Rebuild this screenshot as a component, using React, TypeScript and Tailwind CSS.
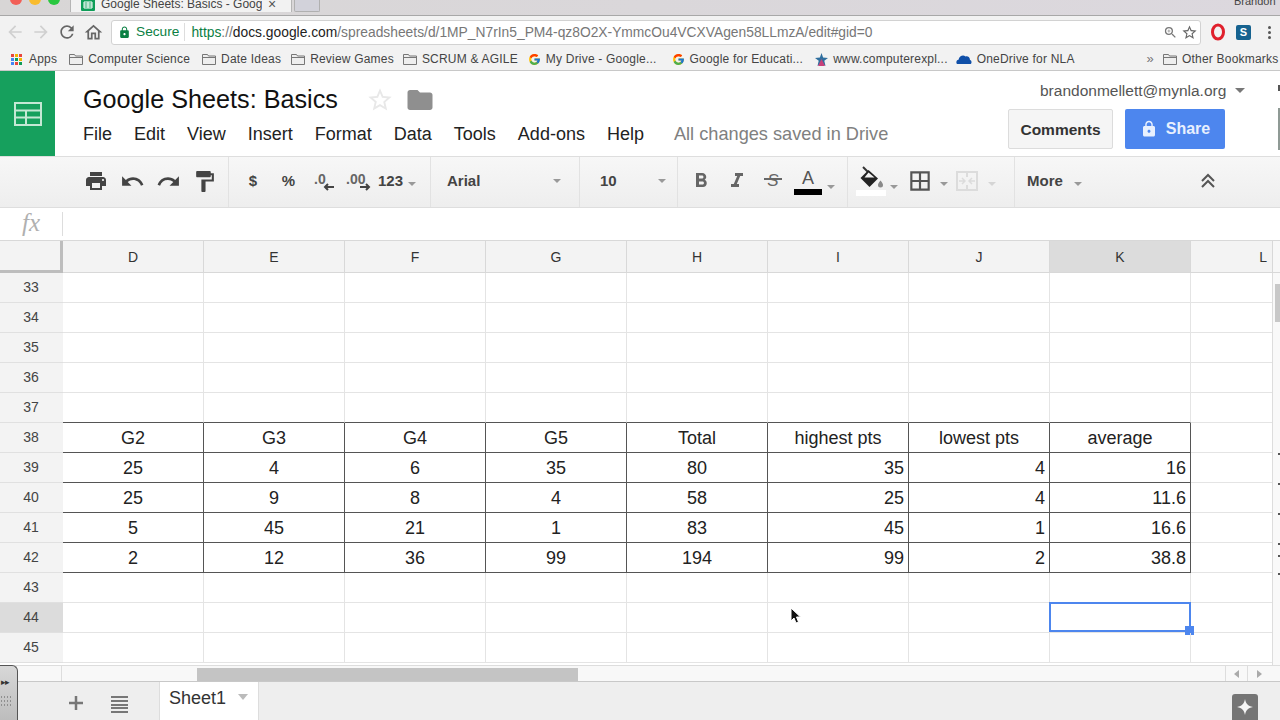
import { FcGoogle } from "react-icons/fc"
import {
  MdArrowBack,
  MdArrowForward,
  MdBorderAll,
  MdFolder,
  MdFormatBold,
  MdFormatItalic,
  MdFormatPaint,
  MdLock,
  MdOutlineHome,
  MdPrint,
  MdRedo,
  MdRefresh,
  MdStarBorder,
  MdUndo,
  MdZoomIn,
} from "react-icons/md"

const columns = ["D", "E", "F", "G", "H", "I", "J", "K"]

const tableRows: Record<number, string[]> = {
  38: ["G2", "G3", "G4", "G5", "Total", "highest pts", "lowest pts", "average"],
  39: ["25", "4", "6", "35", "80", "35", "4", "16"],
  40: ["25", "9", "8", "4", "58", "25", "4", "11.6"],
  41: ["5", "45", "21", "1", "83", "45", "1", "16.6"],
  42: ["2", "12", "36", "99", "194", "99", "2", "38.8"],
}

const rowNumbers = [33, 34, 35, 36, 37, 38, 39, 40, 41, 42, 43, 44, 45]

function Caret({ light }: { light?: boolean }) {
  return (
    <span
      className={`inline-block w-0 h-0 border-x-[4px] border-x-transparent border-t-[4px] ${
        light ? "border-t-[#d5d5d5]" : "border-t-[#999999]"
      }`}
    />
  )
}

function FolderIcon() {
  return (
    <svg width="14" height="12" viewBox="0 0 14 12" fill="none" stroke="#777777" strokeWidth="1">
      <path d="M.5 11.5V1.5h5l1 1.5h7v8.5z" fill="#eeeeee" />
      <path d="M.5 4.5h13" />
    </svg>
  )
}

function AppsIcon() {
  const colors = ["#e8453c", "#f4b400", "#e8453c", "#4285f4", "#0f9d58", "#f4b400", "#4285f4", "#e8453c", "#0f9d58"]
  return (
    <div className="grid grid-cols-3 gap-[1px] w-[11px] mr-[2px]">
      {colors.map((c, i) => (
        <span key={i} className="w-[3px] h-[3px]" style={{ backgroundColor: c }} />
      ))}
    </div>
  )
}

function Bookmark({ icon, label, className }: { icon: React.ReactNode; label: string; className?: string }) {
  return (
    <div className={`flex items-center gap-[5px] shrink-0 ${className ?? ""}`}>
      {icon}
      <span className="whitespace-nowrap">{label}</span>
    </div>
  )
}

function TabStrip() {
  return (
    <div className="h-4 flex shrink-0 bg-gradient-to-r from-[#d8d6d6] to-[#dcd8de] border-b border-[#a8a8a8] overflow-hidden relative">
      <div className="flex gap-[7px] pl-[10px] -mt-[7px]">
        <span className="w-3 h-3 rounded-full bg-[#f25f57]" />
        <span className="w-3 h-3 rounded-full bg-[#f9bc2e]" />
        <span className="w-3 h-3 rounded-full bg-[#29c73f]" />
      </div>
      <div className="ml-[10px] w-[222px] h-4 bg-[#f2f2f2] border-x border-[#b5b5b5] flex items-center pl-[10px] -mt-[4px]">
        <svg width="14" height="13" viewBox="0 0 14 13" className="shrink-0">
          <rect width="14" height="13" rx="1" fill="#0f9d58" />
          <path d="M3 4h8v6H3zM3 6h8M3 8h8M7 4v6" fill="none" stroke="#fff" strokeWidth="1" />
        </svg>
        <span className="ml-[6px] text-[12px] text-[#444444] whitespace-nowrap w-[161px] overflow-hidden">
          Google Sheets: Basics - Goog
        </span>
        <span className="ml-[6px] text-[14px] leading-none text-[#555555]">×</span>
      </div>
      <div className="ml-[2px] w-[26px] h-[12px] bg-[#d2d2da] border-x border-b border-[#b0b0b0] rounded-b-[2px]" />
      <span className="ml-auto -mt-[7px] text-[11px] text-[#444444] whitespace-nowrap w-[46px]">
        Brandon
      </span>
    </div>
  )
}

function UrlBar() {
  return (
    <div className="h-8 flex items-center shrink-0 bg-[#f2f2f2] text-[#777777]">
      <div className="w-[111px] flex items-center pl-[5px] gap-[1px]">
        <MdArrowBack size={20} className="text-[#d0d0d0]" />
        <MdArrowForward size={20} className="text-[#d0d0d0] ml-[5px]" />
        <MdRefresh size={20} className="text-[#666666] ml-[5px]" />
        <MdOutlineHome size={21} className="text-[#666666] ml-[5px]" />
      </div>
      <div className="w-[1090px] h-[25px] bg-white border border-[#d2d2d2] rounded-[3px] flex items-center text-[13.7px]">
        <MdLock size={13} className="ml-[6px] text-[#0b8043]" />
        <span className="ml-[5px] text-[#0b8043]">Secure</span>
        <span className="ml-[5px] mr-[6px] w-px h-[18px] bg-[#dddddd]" />
        <span className="whitespace-nowrap text-[13.82px] text-[#777777]">
          <span className="text-[#0b8043]">https</span>://
          <span className="text-[#222222]">docs.google.com</span>
          /spreadsheets/d/1MP_N7rIn5_PM4-qz8O2X-YmmcOu4VCXVAgen58LLmzA/edit#gid=0
        </span>
        <MdZoomIn size={15} className="ml-auto text-[#777777]" />
        <MdStarBorder size={17} className="ml-[3px] mr-[2px] text-[#666666]" />
      </div>
      <svg width="16" height="18" viewBox="0 0 16 18" className="ml-[9px]">
        <ellipse cx="8" cy="9" rx="5.5" ry="7" fill="none" stroke="#e0202c" strokeWidth="3" />
      </svg>
      <div className="ml-[10px] w-[15px] h-[15px] rounded-[2px] bg-[#16628f] text-white text-[11px] font-bold leading-[15px] text-center">
        S
      </div>
      <div className="ml-[17px] flex flex-col gap-[2px]">
        <span className="w-[3px] h-[3px] rounded-full bg-[#555555]" />
        <span className="w-[3px] h-[3px] rounded-full bg-[#555555]" />
        <span className="w-[3px] h-[3px] rounded-full bg-[#555555]" />
      </div>
    </div>
  )
}

function BookmarksBar() {
  return (
    <div className="h-[23px] flex items-center shrink-0 bg-[#f2f2f2] border-b border-[#c8c8c8] text-[12px] text-[#444444] pl-[11px] tracking-[0.2px] overflow-hidden">
      <Bookmark icon={<AppsIcon />} label="Apps" />
      <Bookmark className="ml-[12px]" icon={<FolderIcon />} label="Computer Science" />
      <Bookmark className="ml-[12px]" icon={<FolderIcon />} label="Date Ideas" />
      <Bookmark className="ml-[10px]" icon={<FolderIcon />} label="Review Games" />
      <Bookmark className="ml-[9px]" icon={<FolderIcon />} label="SCRUM & AGILE" />
      <Bookmark className="ml-[10px]" icon={<FcGoogle size={13} />} label="My Drive - Google..." />
      <Bookmark className="ml-[15px]" icon={<FcGoogle size={13} />} label="Google for Educati..." />
      <Bookmark
        className="ml-[12px]"
        icon={
          <svg width="13" height="13" viewBox="0 0 13 13">
            <path d="M6.5 0l1.6 4.4L13 5 9.3 7.8 10.5 13 6.5 10.1 2.5 13l1.2-5.2L0 5l4.9-.6z" fill="#2f6f9f" />
            <path d="M6.5 6L10 13H3z" fill="#c8417a" />
          </svg>
        }
        label="www.computerexpl..."
      />
      <Bookmark
        className="ml-[8px]"
        icon={
          <svg width="16" height="11" viewBox="0 0 16 11">
            <path d="M1 10c-1.3-1.6-.6-4 1.500-4.300C3.500 2 7 .5 9.500 2.500 12 1.800 14 3.500 14 6c1.800.5 2 3 .7 4z" fill="#0f4fa8" />
          </svg>
        }
        label="OneDrive for NLA"
      />
      <span className="ml-[72px] text-[#777777] text-[13px]">»</span>
      <Bookmark className="ml-[9px]" icon={<FolderIcon />} label="Other Bookmarks" />
    </div>
  )
}

function DocHeader() {
  const menus = ["File", "Edit", "View", "Insert", "Format", "Data", "Tools", "Add-ons", "Help"]
  return (
    <div className="h-[85px] flex shrink-0 bg-white">
      <div className="w-[55px] bg-[#16a05d] flex items-center justify-center">
        <svg width="28" height="24" viewBox="0 0 28 24" fill="none" stroke="#c4e8d4" strokeWidth="2">
          <path d="M1 1h26v22H1zM1 8.500h26M1 15.500h26M12 8.500V23" />
        </svg>
      </div>
      <div className="w-[953px] pl-[28px]">
        <div className="flex items-center h-[28px] mt-[15px]">
          <span className="text-[25.2px] text-[#111111] whitespace-nowrap">Google Sheets: Basics</span>
          <MdStarBorder size={28} className="ml-[28px] text-[#e8e8e8]" />
          <MdFolder size={30} className="ml-[11px] text-[#8f8f8f]" />
        </div>
        <div className="flex items-center mt-[7px] text-[18px] text-[#222222] gap-[22px]">
          {menus.map((m) => (
            <span key={m}>{m}</span>
          ))}
          <span className="ml-[8px] text-[18.2px] text-[#808080] whitespace-nowrap">All changes saved in Drive</span>
        </div>
      </div>
      <div className="flex-1 relative">
        <div className="flex items-center mt-[8px] pl-[32px] text-[15.5px] text-[#555555] whitespace-nowrap">
          brandonmellett@mynla.org
          <span className="ml-[9px] inline-block w-0 h-0 border-x-[5px] border-x-transparent border-t-[5px] border-t-[#777777]" />
        </div>
        <div className="flex mt-[7px] gap-3">
          <div className="w-[105px] h-10 bg-[#f5f5f5] border border-[#dcdcdc] rounded-[2px] text-[15.5px] font-bold text-[#333333] flex items-center justify-center">
            Comments
          </div>
          <div className="w-[100px] h-10 bg-[#4d86ee] rounded-[2px] text-[16px] font-bold text-[#e8f0fe] flex items-center justify-center gap-[8px]">
            <MdLock size={18} />
            Share
          </div>
        </div>
        <span className="absolute right-0 top-[14px] w-[2px] h-[6px] bg-[#555555]" />
        <span className="absolute right-0 top-[37px] w-[2px] h-[42px] bg-[#8f9a95]" />
      </div>
    </div>
  )
}

function Slot({ width, children, className }: { width: string; children: React.ReactNode; className?: string }) {
  return <div className={`${width} flex items-center justify-center shrink-0 ${className ?? ""}`}>{children}</div>
}

function Toolbar() {
  return (
    <div className="h-[52px] flex shrink-0 border-y border-[#dedede] bg-gradient-to-b from-[#f7f7f7] to-[#eeeeee] text-[#444444]">
      <div className="w-[229px] flex items-center border-r border-[#e2e2e2] pl-[78px] pb-[2px]">
        <Slot width="w-9"><MdPrint size={24} /></Slot>
        <Slot width="w-9"><MdUndo size={25} /></Slot>
        <Slot width="w-9"><MdRedo size={25} /></Slot>
        <Slot width="w-9"><MdFormatPaint size={25} /></Slot>
      </div>
      <div className="w-[202px] flex items-center border-r border-[#e2e2e2] pl-[6px] pb-[2px] text-[15px] font-bold">
        <Slot width="w-9">$</Slot>
        <Slot width="w-[35px]">%</Slot>
        <Slot width="w-[35px]">
          <svg width="22" height="24" viewBox="0 0 22 24">
            <text x="1" y="15" fontSize="14" fontWeight="700" fill="#666666" fontFamily="Liberation Sans">.0</text>
            <path d="M21 18h-9M15 15l-3 3 3 3" fill="none" stroke="#444444" strokeWidth="2" />
          </svg>
        </Slot>
        <Slot width="w-[34px]">
          <svg width="26" height="24" viewBox="0 0 26 24">
            <text x="1" y="15" fontSize="14" fontWeight="700" fill="#666666" fontFamily="Liberation Sans">.00</text>
            <path d="M15 18h9M21 15l3 3-3 3" fill="none" stroke="#444444" strokeWidth="2" />
          </svg>
        </Slot>
        <span className="ml-[3px]">123</span>
        <span className="ml-[5px]"><Caret /></span>
      </div>
      <div className="w-[149px] flex items-center border-r border-[#e2e2e2] pl-[16px] pr-[18px] pb-[2px] justify-between text-[15px] font-bold">
        Arial
        <Caret />
      </div>
      <div className="w-[98px] flex items-center border-r border-[#e2e2e2] pl-[20px] pr-[11px] pb-[2px] justify-between text-[15px] font-bold">
        10
        <Caret />
      </div>
      <div className="w-[170px] flex items-center border-r border-[#e2e2e2] pl-[5px] pb-[2px]">
        <Slot width="w-9"><MdFormatBold size={24} className="text-[#666666]" /></Slot>
        <Slot width="w-9"><MdFormatItalic size={24} className="text-[#666666]" /></Slot>
        <Slot width="w-9">
          <span className="relative text-[17px] italic text-[#666666]">
            S
            <span className="absolute -left-[3px] -right-[3px] top-[10px] h-[2px] bg-[#666666]" />
          </span>
        </Slot>
        <div className="w-[34px] flex flex-col items-center">
          <span className="text-[18px] leading-[20px] text-[#555555]">A</span>
          <span className="w-[28px] h-[6px] bg-black mt-[1px]" />
        </div>
        <span className="ml-[2px] mt-[6px]"><Caret /></span>
      </div>
      <div className="w-[167px] flex items-center border-r border-[#e2e2e2] pl-[8px] pb-[2px]">
        <div className="w-[30px] flex flex-col items-center">
          <svg width="26" height="24" viewBox="0 0 26 24">
            <path d="M5 1l6 6" stroke="#333333" strokeWidth="2" fill="none" />
            <path d="M2.500 12L10.500 4 20 12.500 11.500 21z" fill="#222222" />
            <path d="M6.500 11.500h10L10.500 6.500z" fill="#f2f2f2" />
            <path d="M22.500 14.500c-1.500 2-2.500 3.200-2.500 4.500a2.500 2.500 0 0 0 5 0c0-1.300-1-2.500-2.500-4.500z" fill="#8a8a8a" />
          </svg>
          <span className="w-[30px] h-[6px] bg-white" />
        </div>
        <span className="ml-[4px] mt-[6px]"><Caret /></span>
        <MdBorderAll size={26} className="ml-[9px] text-[#555555]" />
        <span className="ml-[7px]"><Caret /></span>
        <svg width="24" height="22" viewBox="0 0 24 22" fill="none" stroke="#dcdcdc" strokeWidth="2" className="ml-[7px]">
          <path d="M2 2h20v18H2zM12 2v5M12 15v5" />
          <path d="M4 11h5M7 8l3 3-3 3M20 11h-5M17 8l-3 3 3 3" strokeWidth="1.500" />
        </svg>
        <span className="ml-[9px]"><Caret light /></span>
      </div>
      <div className="flex-1 flex items-center pl-[12px] pb-[2px] text-[15px] font-bold">
        More
        <span className="ml-[11px]"><Caret /></span>
        <svg width="16" height="16" viewBox="0 0 16 16" fill="none" stroke="#555555" strokeWidth="2" className="ml-[118px]">
          <path d="M2 8l6-6 6 6M2 14l6-6 6 6" />
        </svg>
      </div>
    </div>
  )
}

function FormulaBar() {
  return (
    <div className="h-8 flex items-center shrink-0 bg-white">
      <div className="w-[63px] h-[24px] border-r border-[#dddddd] flex items-center justify-center font-['Liberation_Serif',serif] italic text-[25px] text-[#b0b0b0] pb-[2px]">
        fx
      </div>
    </div>
  )
}

function ColumnHeaders() {
  return (
    <div className="h-[33px] grid grid-cols-[63px_repeat(8,141px)_81px_8px] shrink-0 bg-[#f3f3f3] border-t border-[#d8d8d8] text-[14px] text-[#333333]">
      <div className="border-r-[3px] border-b-[3px] border-[#bdbdbd]" />
      {columns.map((c) => (
        <div
          key={c}
          className={`flex items-center justify-center pt-[1px] border-r border-b border-[#d8d8d8] ${
            c === "K" ? "bg-[#dcdcdc]" : ""
          }`}
        >
          {c}
        </div>
      ))}
      <div className="flex items-center justify-end pt-[1px] pr-[5px] border-b border-[#d8d8d8]">L</div>
      <div className="border-l border-b border-[#d8d8d8] bg-[#f7f7f7]" />
    </div>
  )
}

function SheetRow({ n }: { n: number }) {
  const values = tableRows[n]
  const inTable = n >= 38 && n <= 42
  const topOfTable = n === 37
  return (
    <div className="h-[30px] flex">
      <div
        className={`w-[63px] flex items-center justify-center pr-[1px] border-b border-[#e0e0e0] text-[14px] text-[#444444] ${
          n === 44 ? "bg-[#dcdcdc]" : "bg-[#f3f3f3]"
        }`}
      >
        {n}
      </div>
      {columns.map((c, i) => {
        const selected = n === 44 && c === "K"
        const right = inTable && n > 38 && i >= 5
        return (
          <div
            key={c}
            className={`relative w-[141px] flex items-center pl-[4px] pr-[4px] pt-[2px] text-[18px] text-[#222222] border-r border-b ${
              right ? "justify-end" : "justify-center"
            } ${inTable ? "border-r-[#555555] border-b-[#555555]" : "border-[#e4e4e4]"} ${
              topOfTable ? "border-b-[#555555]" : ""
            }`}
          >
            {values ? values[i] : ""}
            {selected && (
              <div className="absolute -left-px -top-px -right-px bottom-0 border-2 border-[#4d86ee]">
                <span className="absolute -right-[5px] -bottom-[5px] w-[9px] h-[9px] bg-[#4d86ee]" />
              </div>
            )}
          </div>
        )
      })}
      <div className="w-[81px] border-b border-[#e4e4e4]" />
    </div>
  )
}

function Grid() {
  return (
    <div className="h-[392px] flex shrink-0 bg-white">
      <div className="w-[1272px]">
        {rowNumbers.map((n) => (
          <SheetRow key={n} n={n} />
        ))}
      </div>
      <div className="relative flex-1 bg-[#f9f9f9] border-l border-[#dddddd] pl-[2px]">
        <div className="mt-[11px] h-[38px] bg-[#c8c8c8]" />
        {[180, 210, 240, 270, 282, 300].map((y) => (
          <span key={y} className="absolute right-0 w-[2px] h-[2px] bg-[#555555]" style={{ top: y }} />
        ))}
      </div>
    </div>
  )
}

function HScrollBar() {
  return (
    <div className="h-4 flex shrink-0 bg-[#f8f8f8] border-t border-[#dddddd]">
      <div className="w-[62px] border-r border-[#dddddd]" />
      <div className="ml-[135px] mt-[2px] w-[381px] bg-[#c4c4c4]" />
      <div className="ml-[647px] w-[23px] border-x border-[#dddddd] flex items-center justify-center">
        <span className="w-0 h-0 border-y-[4px] border-y-transparent border-r-[5px] border-r-[#aaaaaa]" />
      </div>
      <div className="w-[23px] flex items-center justify-center">
        <span className="w-0 h-0 border-y-[4px] border-y-transparent border-l-[5px] border-l-[#aaaaaa]" />
      </div>
    </div>
  )
}

function SheetBar() {
  return (
    <div className="flex-1 flex border-t border-[#c8c8c8] bg-[#eeeeee]">
      <svg width="16" height="16" viewBox="0 0 16 16" className="ml-[68px] mt-[13px]" fill="none" stroke="#777777" strokeWidth="2.500">
        <path d="M8 1v14M1 8h14" />
      </svg>
      <div className="ml-[27px] mt-[14px] w-[17px] h-[17px] flex flex-col justify-between">
        <span className="h-[2px] bg-[#777777]" />
        <span className="h-[2px] bg-[#777777]" />
        <span className="h-[2px] bg-[#777777]" />
        <span className="h-[2px] bg-[#777777]" />
        <span className="h-[2px] bg-[#777777]" />
      </div>
      <div className="ml-[31px] w-[100px] bg-white border-x border-[#dddddd] flex items-start pt-[3px] pl-[9px] text-[18px] text-[#333333]">
        Sheet1
        <span className="ml-[12px] mt-[9px] inline-block w-0 h-0 border-x-[5px] border-x-transparent border-t-[6px] border-t-[#bbbbbb]" />
      </div>
      <div className="ml-auto mr-[22px] mt-[12px] w-[26px] h-[26px] rounded-t-[3px] bg-[#757575] flex items-center justify-center">
        <svg width="16" height="16" viewBox="0 0 16 16">
          <path d="M8 0c.8 4.500 2.700 6.900 8 8-5.300 1.100-7.200 3.500-8 8-.8-4.500-2.700-6.900-8-8 5.300-1.100 7.200-3.500 8-8z" fill="#f5f5f5" />
        </svg>
      </div>
    </div>
  )
}

export default function App() {
  return (
    <div className="relative w-[1280px] h-[720px] overflow-hidden flex flex-col bg-white font-['Liberation_Sans',sans-serif]">
      <TabStrip />
      <UrlBar />
      <BookmarksBar />
      <DocHeader />
      <Toolbar />
      <FormulaBar />
      <ColumnHeaders />
      <Grid />
      <HScrollBar />
      <SheetBar />

      {/* mouse pointer */}
      <svg width="12" height="18" viewBox="0 0 12 18" className="absolute left-[790px] top-[607px]">
        <path d="M1 1v13l3-3 2 5 2.500-1-2-5h4z" fill="#111111" stroke="#ffffff" strokeWidth="1" />
      </svg>

      {/* dock sliver at the left edge */}
      <div className="absolute left-0 top-[665px] w-[18px] h-[55px] rounded-tr-[6px] border-t border-r border-[#555555] bg-gradient-to-b from-[#d8d8d8] to-[#bdbdbd] flex flex-col items-start pl-[1px] pt-[12px]">
        <span className="text-[9px] leading-none text-[#333333] tracking-[-1px]">▸▸</span>
        <div className="mt-[9px] grid grid-cols-4 gap-[2px]">
          {[0, 1, 2, 3, 4, 5, 6, 7, 8, 9, 10, 11].map((i) => (
            <span key={i} className="w-[1px] h-[2px] bg-[#8f8f8f]" />
          ))}
        </div>
      </div>
    </div>
  )
}
